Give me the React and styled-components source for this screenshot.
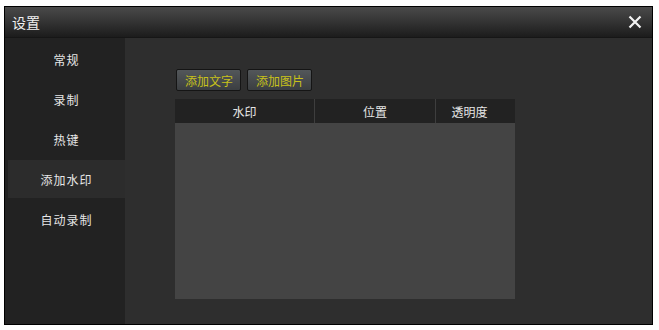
import styled, { createGlobalStyle } from "styled-components";

const GlobalStyle = createGlobalStyle`
  html, body {
    margin: 0;
    padding: 0;
    background: #ffffff;
  }
  body {
    font-family: "Noto Sans CJK SC", "Liberation Sans", sans-serif;
  }
`;

const Page = styled.div`
  padding: 6px 0 0 4px;
`;

const Window = styled.div`
  width: 647px;
  height: 317px;
  border: 1px solid #000;
  display: flex;
  flex-direction: column;
  background: #2e2e2e;
`;

const TitleBar = styled.div`
  height: 30px;
  flex: none;
  display: flex;
  align-items: center;
  justify-content: space-between;
  padding: 0 10px 0 7px;
  background: linear-gradient(#4a4a4a, #1c1c1c);
  border-bottom: 1px solid #161616;
  color: #f0f0f0;
  font-size: 14px;
`;

const Close = styled.svg`
  width: 14px;
  height: 14px;
  display: block;
`;

const Body = styled.div`
  flex: 1;
  display: flex;
  min-height: 0;
`;

const Sidebar = styled.div`
  width: 120px;
  flex: none;
  background: #222222;
  padding-top: 2px;
  display: flex;
  flex-direction: column;
`;

const MenuItem = styled.div`
  height: 38px;
  margin: 0 0 2px 3px;
  display: flex;
  align-items: center;
  justify-content: center;
  font-size: 12px;
  color: #e6e6e6;
  letter-spacing: 1px;
  background: ${(p) => (p.$active ? "#2c2c2c" : "transparent")};
`;

const Content = styled.div`
  flex: 1;
  padding: 31px 0 0 50px;
`;

const Toolbar = styled.div`
  display: flex;
  gap: 6px;
  margin-left: 1px;
`;

const Button = styled.div`
  height: 20px;
  padding: 0 7px 0 8px;
  display: flex;
  align-items: center;
  border: 1px solid #151515;
  border-radius: 2px;
  background: linear-gradient(#53575a, #3b3e41);
  color: #c8c21a;
  font-size: 12px;
`;

const Table = styled.div`
  width: 340px;
  margin-top: 8px;
  display: flex;
  flex-direction: column;
`;

const Header = styled.div`
  height: 24px;
  display: grid;
  grid-template-columns: 140px 121px 1fr;
  background: #222222;
  align-items: center;
`;

const HeadCell = styled.div`
  height: 24px;
  display: flex;
  align-items: center;
  justify-content: center;
  color: #e6e6e6;
  font-size: 12px;
  border-right: ${(p) => (p.$last ? "none" : "1px solid #3e3e3e")};
  padding-right: ${(p) => (p.$last ? "12px" : "0")};
  box-sizing: border-box;
`;

const TableBody = styled.div`
  height: 176px;
  background: #444444;
`;

const tabs = ["常规", "录制", "热键", "添加水印", "自动录制"];

export default function App() {
  return (
    <Page>
      <GlobalStyle />
      <Window>
        <TitleBar>
          <span>设置</span>
          <Close viewBox="0 0 14 14">
            <path d="M1.5 1.5 L12.5 12.5 M12.5 1.5 L1.5 12.5" stroke="#f2f2f2" strokeWidth="2.2" />
          </Close>
        </TitleBar>
        <Body>
          <Sidebar>
            {tabs.map((t) => (
              <MenuItem key={t} $active={t === "添加水印"}>
                {t}
              </MenuItem>
            ))}
          </Sidebar>
          <Content>
            <Toolbar>
              <Button>添加文字</Button>
              <Button>添加图片</Button>
            </Toolbar>
            <Table>
              <Header>
                <HeadCell>水印</HeadCell>
                <HeadCell>位置</HeadCell>
                <HeadCell $last>透明度</HeadCell>
              </Header>
              <TableBody />
            </Table>
          </Content>
        </Body>
      </Window>
    </Page>
  );
}
